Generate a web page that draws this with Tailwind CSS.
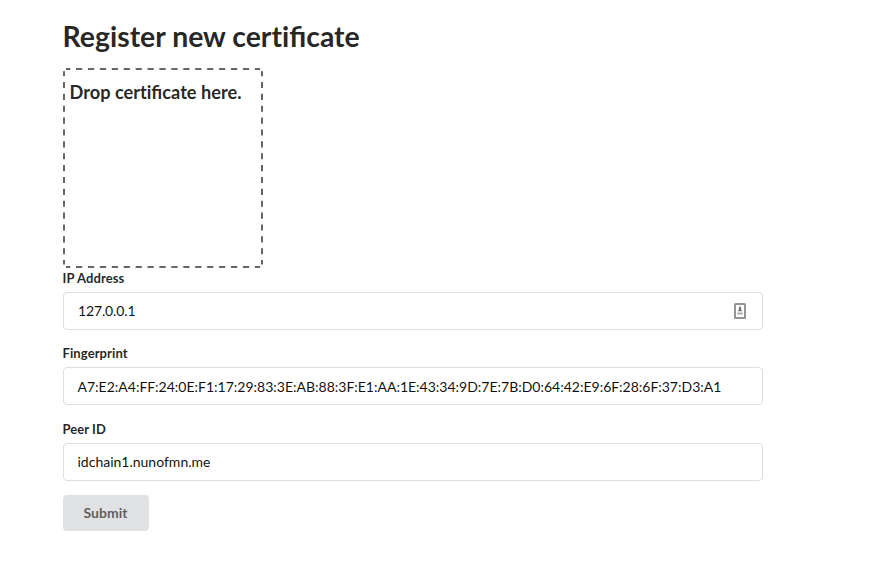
<!DOCTYPE html>
<html lang="en"><head><meta charset="utf-8"><title>Register new certificate</title>
<script src="https://cdn.jsdelivr.net/npm/@tailwindcss/browser@4"></script></head>
<body class="bg-white font-['Lato',sans-serif] text-[14px] text-black/87">
<main class="ml-[63px] w-[700px] pt-[18px]">
<h1 class="-ml-[0.5px] h-[36px] text-[28.4px] leading-[36px] font-bold">Register new cert&zwnj;ificate</h1>
<div class="relative mt-[14px] h-[200px] w-[200px] pt-[13px] pl-[6.5px]">
<svg class="absolute inset-0" width="200" height="200" fill="none" stroke="#666" stroke-width="2"><path d="M3 1H197M3 199H197" stroke-dasharray="6.2 5.72" stroke-dashoffset="1.9"/><path d="M1 3.3V196.5M199 3.3V196.5" stroke-dasharray="6.1 5.77" stroke-dashoffset="1.2"/></svg>
<h3 class="text-[18.2px] leading-[23px] font-bold">Drop cert&zwnj;ificate here.</h3>
</div>
<form>
<label class="-ml-[0.5px] block h-[24px] pt-[1px] text-[13px] leading-[19px] font-bold tracking-[0.1px]">IP Address</label>
<div class="flex h-[38px] items-center justify-between rounded-[4px] border border-[#dededf] px-[14px] text-black/95"><span class="pb-[2px] tracking-[-0.14px]">127.0.0.1</span>
<svg class="mr-[2px]" width="12" height="16" viewBox="0 0 12 16" fill="none"><rect x="1" y="1" width="10" height="14" rx=".5" stroke="#959595" stroke-width="2"/><path d="M6 3L7.2 5V7L8.5 8.3H3.5L4.8 7V5Z" fill="#707070"/><path d="M3.3 9.5H8.7V11.5H3.3Z" fill="#aaa"/></svg></div>
<label class="-ml-[0.5px] mt-[14px] block h-[23px] text-[13px] leading-[19px] font-bold tracking-[0.1px]">Fingerprint</label>
<div class="flex h-[38px] items-center rounded-[4px] border border-[#dededf] px-[13.5px] text-black/95">A7:E2:A4:FF:24:0E:F1:17:29:83:3E:AB:88:3F:E1:AA:1E:43:34:9D:7E:7B:D0:64:42:E9:6F:28:6F:37:D3:A1</div>
<label class="-ml-[0.5px] mt-[15px] block h-[23px] text-[13px] leading-[19px] font-bold tracking-[0.05px]">Peer ID</label>
<div class="flex h-[38px] items-center rounded-[4px] border border-[#dededf] px-[13.5px] pb-[2px] text-black/95">idchain1.nunofmn.me</div>
<button type="button" class="mt-[14px] block h-[36px] w-[86px] rounded-[4px] bg-[#e0e1e2] pr-[1px] pb-[2px] font-bold text-black/60">Submit</button>
</form></main></body></html>
